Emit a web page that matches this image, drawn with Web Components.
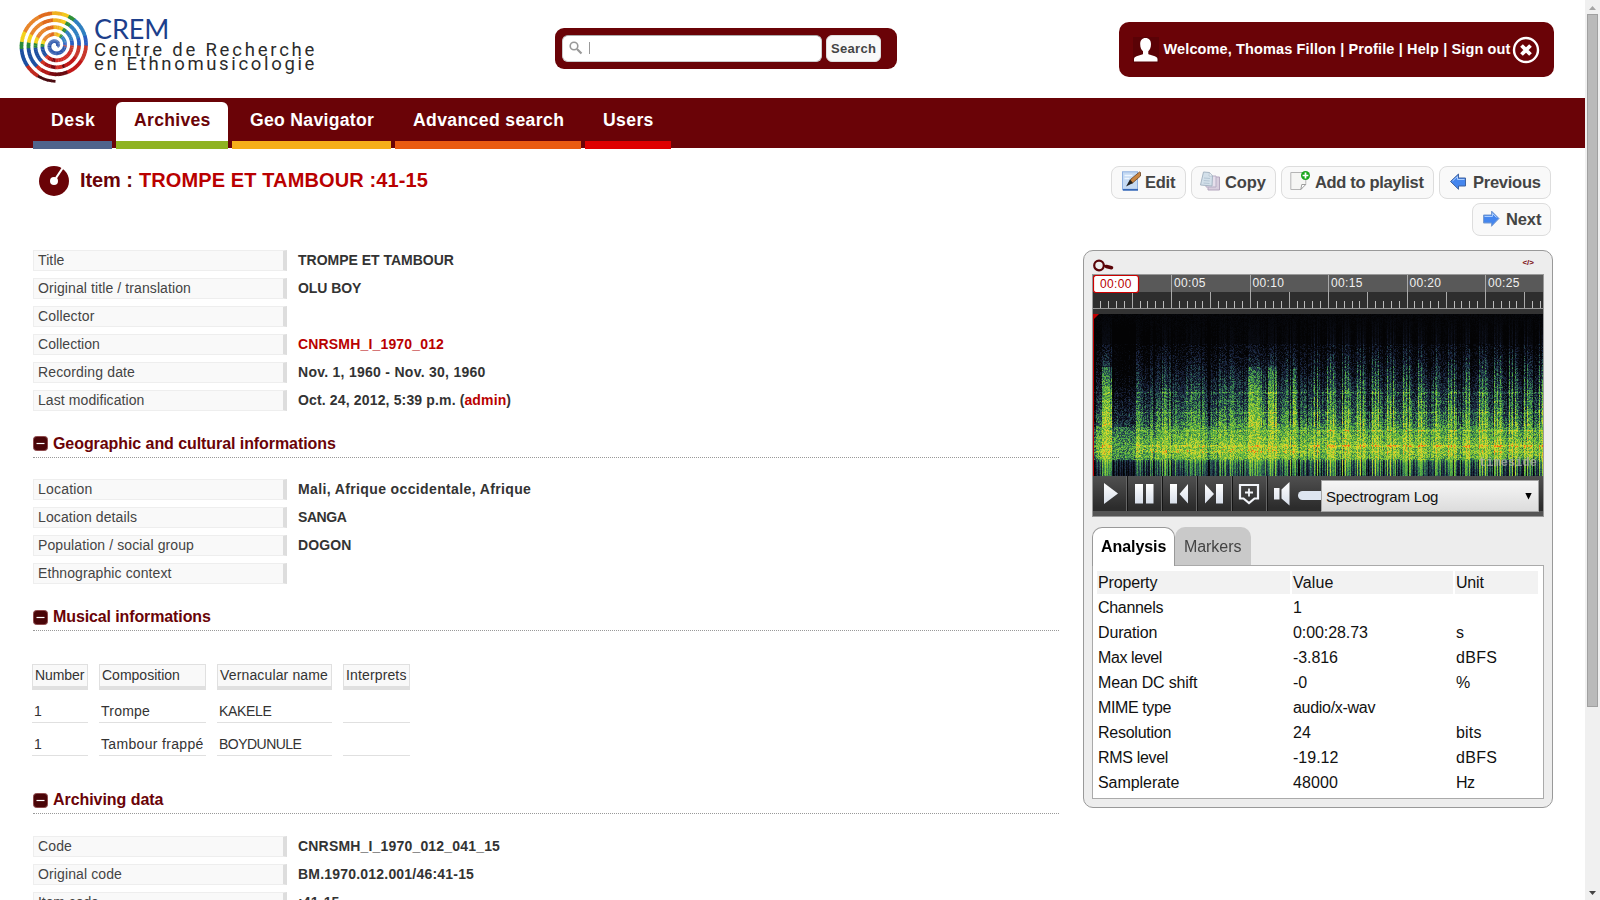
<!DOCTYPE html>
<html lang="en">
<head>
<meta charset="utf-8">
<title>Item : TROMPE ET TAMBOUR</title>
<style>
html,body{margin:0;height:900px;overflow:hidden;background:#fff;font-family:"Liberation Sans",Arial,sans-serif;color:#333}
</style>
</head>
<body>
<archive-app></archive-app>
<script>
const define = (name, html, init) => {
  const tpl = document.createElement('template');
  tpl.innerHTML = html;
  customElements.define(name, class extends HTMLElement {
    constructor() {
      super();
      this.attachShadow({mode: 'open'}).appendChild(tpl.content.cloneNode(true));
    }
    connectedCallback() { if (init && !this.ready) { this.ready = true; init.call(this, this.shadowRoot); } }
  });
};

define('archive-app', `
<style>
:host{display:flex;width:1600px;height:900px;overflow:hidden}
.page{width:1585px;height:900px;overflow:hidden;display:flex;flex-direction:column;flex:none}
main{display:flex;justify-content:space-between;padding:0 32px 0 33px}
.left{width:1026px}
.right{width:470px}
</style>
<div class="page">
  <site-header></site-header>
  <site-nav></site-nav>
  <item-bar></item-bar>
  <main>
    <div class="left">
      <field-row label="Title" w="27"><fit-text w="156.5">TROMPE ET TAMBOUR</fit-text></field-row>
      <field-row label="Original title / translation" w="153.5"><fit-text w="64">OLU BOY</fit-text></field-row>
      <field-row label="Collector" w="57"></field-row>
      <field-row label="Collection" w="62.5"><fit-text w="146.5" style="color:#b90000">CNRSMH_I_1970_012</fit-text></field-row>
      <field-row label="Recording date" w="97.5"><fit-text w="188">Nov. 1, 1960 - Nov. 30, 1960</fit-text></field-row>
      <field-row label="Last modification" w="107"><fit-text w="167">Oct. 24, 2012, 5:39 p.m. (</fit-text><fit-text w="42.5" style="color:#b90000">admin</fit-text><span>)</span></field-row>
      <section-title style="margin-top:22px;--lh:21px;--iy:3px" label="Geographic and cultural informations" w="283.5"></section-title>
      <field-row label="Location" w="55"><fit-text w="233.5">Mali, Afrique occidentale, Afrique</fit-text></field-row>
      <field-row label="Location details" w="99.5"><fit-text w="49.5">SANGA</fit-text></field-row>
      <field-row label="Population / social group" w="156.5"><fit-text w="54">DOGON</fit-text></field-row>
      <field-row label="Ethnographic context" w="134"></field-row>
      <section-title style="margin-top:22px" label="Musical informations" w="158.5"></section-title>
      <performance-table></performance-table>
      <section-title style="margin-top:33px;margin-bottom:21px" label="Archiving data" w="111"></section-title>
      <field-row label="Code" w="34.5"><fit-text w="202.5">CNRSMH_I_1970_012_041_15</fit-text></field-row>
      <field-row label="Original code" w="84.5"><fit-text w="176.5">BM.1970.012.001/46:41-15</fit-text></field-row>
      <field-row label="Item code" w="61.5"><fit-text w="42">:41-15</fit-text></field-row>
    </div>
    <div class="right"><media-panel></media-panel></div>
  </main>
</div>
<scroll-bar></scroll-bar>`);

define('site-header', `
<style>
:host{display:flex;height:98px;box-sizing:border-box;position:relative;align-items:flex-start}
.search{margin:28px 0 0 235px;width:342px;height:41px;border-radius:9px;background:#6a0307;box-sizing:border-box;padding:7px;display:flex;gap:4px}
.input{width:260px;height:27px;box-sizing:border-box;border:1px solid #ccc;border-top-color:#aaa;border-radius:6px;background:#fff;display:flex;align-items:center;padding-left:6px}
.input svg{margin-top:-1px}
.caret{width:1px;height:12px;background:#999;margin:-2px 0 0 6px}
.btn{width:55px;height:27px;box-sizing:border-box;border:1px solid #ddd;border-radius:6px;background:#f9f9f9;color:#444;font:bold 13px/25px "Liberation Sans",sans-serif;text-align:left;padding-left:4px;white-space:nowrap}
.user{margin:22px 0 0 222px;width:435px;height:55px;border-radius:10px;background:#6a0307;color:#fff;display:flex;align-items:center;box-sizing:border-box;padding:0 0 0 14px;font:bold 14.500px/18px "Liberation Sans",sans-serif}
.user fit-text{margin-left:4.500px;margin-top:-2px}
.user .x{margin-left:2px}
crem-logo{width:320px}
</style>
<crem-logo></crem-logo>
<div class="search">
  <div class="input"><svg width="14" height="14" viewBox="0 0 14 14"><circle cx="5" cy="5" r="3.8" fill="none" stroke="#999" stroke-width="1.6"/><path d="M8 8l4.5 4.5" stroke="#999" stroke-width="2.2"/></svg><i class="caret"></i></div>
  <div class="btn"><fit-text w="45.500">Search</fit-text></div>
</div>
<div class="user">
  <svg width="26" height="26" viewBox="0 0 26 26"><rect width="26" height="26" fill="#5a0206"/><path d="M12.5 1c3.600 0 5.500 2.400 5.500 6 0 3.500-1.200 6-2.700 7.300V17c1 1.300 9.200 1.600 9.200 5v2.500H1V22c0-3.400 8-3.700 9-5v-2.700C8.300 13 7.200 10.500 7.200 7 7.200 3.400 9 1 12.500 1z" fill="#fff"/></svg>
  <fit-text w="347.500">Welcome, Thomas Fillon | Profile | Help | Sign out</fit-text>
  <svg class="x" width="28" height="28" viewBox="0 0 28 28"><circle cx="14" cy="14" r="12" fill="none" stroke="#fff" stroke-width="2.400"/><path d="M9.500 9.500l9 9M18.500 9.500l-9 9" stroke="#fff" stroke-width="3.800"/></svg>
</div>`);

define('crem-logo', `
<style>
:host{display:flex;height:98px}
svg{flex:none;width:94px;height:90px}
.t{display:flex;flex-direction:column;align-items:flex-start;padding-top:13px}
.c{font:400 27px/32px Lato,sans-serif;color:#1d3f8c}
.r{font:18.500px/14px Roboto,sans-serif;color:#2b2b2b;white-space:nowrap}
</style>
<svg viewBox="0 0 94 90"></svg>
<div class="t"><fit-text class="c" w="76">CREM</fit-text><fit-text class="r" w="221" style="margin-top:-2px">Centre de Recherche</fit-text><fit-text class="r" w="221">en Ethnomusicologie</fit-text></div>`,
function (root) {
  const svg = root.querySelector('svg'), cx = 55.500, cy = 45.500;
  const stops = [[0,'#7a0a12'],[12,'#b01818'],[28,'#d03020'],[42,'#1d4fa0'],[76,'#1d4fa0'],[84,'#2a8a3a'],[96,'#f3d21c'],[112,'#e8852a'],[150,'#e06a1c'],[172,'#f0b020'],[190,'#f3c81c'],[204,'#2f9038'],[216,'#2f7fc0'],[250,'#2a5cc0'],[266,'#c8382c'],[300,'#c01818'],[335,'#6a0a10'],[361,'#7a0a12']];
  const pt = a => { const r = 35.800 - 7 * a / 360, t = (90 + a) * Math.PI / 180; return [cx + r * Math.cos(t), cy + r * Math.sin(t)]; };
  let out = '';
  for (let a = 0; a < 1740; a += 6) {
    const p = pt(a), q = pt(a + 7), m = a % 360;
    let col = stops.filter(s => s[0] <= m).pop()[1];
    if (a > 1350) col = '#2450a8';
    else if (a < 50) col = m < 25 ? '#4a0a10' : '#c02a20';
    else if (a > 700 && m > 290) col = '#d02c24';
    out += `<path d="M${p.map(v => v.toFixed(2))}L${q.map(v => v.toFixed(2))}" stroke="${col}" stroke-width="${a < 30 ? 2.800 : 3.700}" fill="none"/>`;
  }
  svg.innerHTML = out;
});

define('site-nav', `
<style>
:host{display:flex;height:50px;background:#6a0307;padding:4px 0 0 33px;box-sizing:border-box;gap:4px;flex:none}
div{height:47px;box-sizing:border-box;border-bottom:8px solid;padding:0 0 0 18px;color:#fff;font:bold 17.600px/37px "Liberation Sans",sans-serif;white-space:nowrap}
.on{background:#fff;border-radius:6px 6px 0 0;color:#6a0307}
</style>
<div style="width:79px;border-color:#4f648c"><fit-text w="44.500">Desk</fit-text></div>
<div class="on" style="width:112px;border-color:#8fb322"><fit-text w="77">Archives</fit-text></div>
<div style="width:159px;border-color:#f5ae19"><fit-text w="124.500">Geo Navigator</fit-text></div>
<div style="width:186px;border-color:#e95a10"><fit-text w="151.500">Advanced search</fit-text></div>
<div style="width:86px;border-color:#de0000"><fit-text w="51">Users</fit-text></div>`);

define('item-bar', `
<style>
:host{display:flex;height:102px;justify-content:space-between;padding:0 34px 0 38px;box-sizing:border-box;flex:none}
h1{margin:18px 0 0;display:flex;font:bold 20px/24px "Liberation Sans",sans-serif;color:#6a0307;height:32px;align-items:flex-start;white-space:nowrap}
.b{display:flex;flex-wrap:wrap;justify-content:flex-end;align-content:flex-start;gap:4px 5px;width:460px;margin-top:18px}
.b span{box-sizing:border-box;height:33px;border:1px solid #ddd;border-radius:8px;background:#f9f9f9;color:#444;font:bold 16.500px/31px "Liberation Sans",sans-serif;display:flex;padding-left:10px;white-space:nowrap}
.b svg{width:20px;height:20px;margin:4px 4px 0 0;flex:none}
</style>
<h1><svg width="32" height="32" viewBox="0 0 32 32"><circle cx="16" cy="15" r="15" fill="#6a0307"/><path d="M18 12L25 1.500" stroke="#fff" stroke-width="2.200"/><circle cx="16" cy="15" r="4" fill="#fff"/></svg><fit-text w="53.500" style="margin:2px 0 0 10px">Item :</fit-text><fit-text w="289.500" style="margin:2px 0 0 6px;color:#b90000">TROMPE ET TAMBOUR :41-15</fit-text></h1>
<div class="b">
<span style="width:75px"><svg viewBox="0 0 20 20" style="margin-right:3px"><rect x=".5" y=".8" width="15" height="18" fill="#c5daf3" stroke="#8fb0e0"/><path d="M1 18.800h15" stroke="#3567b8" stroke-width="1.800"/><path d="M2.500 4.500h8M2.500 7.500h5" stroke="#eef6ff" stroke-width="1.500"/><path d="M7 12L9 8l8.500-7L18.500 1.500V5L10.500 12z" fill="#c98642" stroke="#6b4424" stroke-width=".8"/><path d="M4 15.500L8 8.500l3 3.500z" fill="#222"/></svg><fit-text w="31">Edit</fit-text></span>
<span style="width:85px;padding-left:8px"><svg viewBox="0 0 20 20" style="margin-right:5px"><path d="M8 6h11.500v13H8z" fill="#d8cede" stroke="#b3a5bd"/><path d="M6 5h10v11H6z" fill="#e6dfec" stroke="#b7aec5"/><path d="M3.500 1l6 .5 3 3.500-.5 10-11.500-1z" fill="#d3e0ea" stroke="#a6b5c3"/><path d="M9.500 1.500l-.5 3.500h3.500z" fill="#f6fafd" stroke="#a6b5c3" stroke-width=".6"/><path d="M4 7l6 .5M3.700 9.500l6 .5M3.500 12l6 .5" stroke="#b4c6d4"/></svg><fit-text w="41.500">Copy</fit-text></span>
<span style="width:153px;padding-left:8px"><svg viewBox="0 0 20 20" style="margin-right:5px"><path d="M.8 1.500h15v11l-5 6H.8z" fill="#f6f6f4" stroke="#b5b5b5"/><path d="M10.800 18.500l1-5h4z" fill="#fff" stroke="#888" stroke-width=".8"/><circle cx="15.500" cy="4.500" r="4.500" fill="#19a51b"/><path d="M15.500 1.600v5.800M12.600 4.500h5.800" stroke="#fff" stroke-width="1.700"/></svg><fit-text w="109.500">Add to playlist</fit-text></span>
<span style="width:112px;padding-left:9px"><svg viewBox="0 0 20 20"><path d="M1.500 10.500L9.500 3v4h7v8h-7v3.300z" fill="#4586ee" stroke="#40639f"/><path d="M3.500 10l5-4.500V8.500h7" stroke="#a9cdff" fill="none"/></svg><fit-text w="68.500">Previous</fit-text></span>
<span style="width:79px;padding-left:9px"><svg viewBox="0 0 20 20" style="margin-right:4px"><path d="M17 10.500L9.500 3v4h-8v8h8v3.300z" fill="#4586ee" stroke="#7a9ccf"/><path d="M2.500 8.500h8v-3l4 4" stroke="#a9cdff" fill="none"/></svg><fit-text w="36">Next</fit-text></span>
</div>`);

define('field-row', `
<style>
:host{display:flex;height:21px;margin-bottom:7px;font-size:14px;line-height:19px;white-space:nowrap}
.l{box-sizing:border-box;width:254px;border:1px solid #eee;border-right:4px solid #ddd;background:#f9f9f9;color:#444;padding-left:4px;margin-right:11px}
.v{font-weight:bold;color:#333;padding-top:1px;display:flex}
</style><div class="l"><fit-text></fit-text></div><div class="v"><slot></slot></div>`,
function (root) {
  const t = root.querySelector('fit-text');
  t.textContent = this.getAttribute('label');
  t.setAttribute('w', this.getAttribute('w'));
});

define('section-title', `
<style>
:host{display:block;height:26px;margin-bottom:20px}
div{display:flex;align-items:flex-start;border-bottom:1px dotted #999;height:25px;box-sizing:border-box;font:bold 16px/var(--lh,22px) "Liberation Sans",sans-serif;color:#6a0307;white-space:nowrap}
svg{margin:var(--iy,4px) 5px 0 0;flex:none}
</style>
<div><svg width="15" height="15" viewBox="0 0 15 15"><rect x=".5" y=".5" width="14" height="14" rx="3" fill="#4a0508" stroke="#8f4a4d"/><path d="M3.500 7.500h8" stroke="#fff" stroke-width="1.200"/></svg><fit-text></fit-text></div>`,
function (root) {
  const t = root.querySelector('fit-text');
  t.textContent = this.getAttribute('label');
  t.setAttribute('w', this.getAttribute('w'));
});

define('performance-table', `
<style>
:host{display:grid;grid-template-columns:56px 107px 115px 67px;column-gap:11px;margin:32px 0 0 -1px;font-size:14px;color:#333;white-space:nowrap}
.h{height:26px;box-sizing:border-box;border:1px solid #e0e0e0;border-bottom-width:4px;background:#f9f9f9;line-height:21px;padding-left:2px;color:#333}
.c{height:33px;box-sizing:border-box;border-bottom:1px solid #e0e0e0;padding:12px 0 0 2px;line-height:18px}
</style>
<div class="h"><fit-text w="50">Number</fit-text></div><div class="h"><fit-text w="78.500">Composition</fit-text></div><div class="h"><fit-text w="108.500">Vernacular name</fit-text></div><div class="h"><fit-text w="61">Interprets</fit-text></div>
<div class="c">1</div><div class="c"><fit-text w="49.500">Trompe</fit-text></div><div class="c"><fit-text w="53.500">KAKELE</fit-text></div><div class="c"></div>
<div class="c">1</div><div class="c"><fit-text w="103">Tambour frappé</fit-text></div><div class="c"><fit-text w="83.500">BOYDUNULE</fit-text></div><div class="c"></div>`);

define('media-panel', `
<style>
:host{display:block;box-sizing:border-box;width:470px;height:558px;background:#ededed;border:1px solid #999;border-radius:10px;padding:0 8px}
.top{height:23px;display:flex;justify-content:space-between;align-items:flex-start}
.code{font:bold 8px/10px "Liberation Sans",sans-serif;color:#7a0a0e;margin:7px 10px 0 0}
.tabs{display:flex;margin-top:10px;height:38px;font-size:16px;line-height:37px;position:relative;z-index:1;white-space:nowrap}
.a{box-sizing:border-box;width:83px;height:39px;background:#fff;border:1px solid #999;border-bottom:0;border-radius:10px 10px 0 0;padding-left:8px;font-weight:bold;color:#000}
.m{box-sizing:border-box;width:76px;background:#c9c9c9;border-radius:10px 10px 0 0;padding-left:9px;color:#444;line-height:39px}
.box{box-sizing:border-box;width:452px;height:234px;border:1px solid #aaa;background:#fff;padding:5px 0 0 4px;display:grid;grid-template-columns:193px 161px 83px;grid-auto-rows:23px;gap:2px;font-size:16px;line-height:23px;color:#111;white-space:nowrap}
.box div{padding-left:1px}
.box .h{background:#f2f2f2}
</style>
<div class="top"><svg width="22" height="16" viewBox="0 0 22 16" style="margin:7px 0 0 0"><circle cx="7" cy="7.500" r="4.800" fill="none" stroke="#5a0408" stroke-width="2.200"/><path d="M12 7.500l3 1" stroke="#5a0408" stroke-width="2"/><path d="M14.500 8.500l5 1.200" stroke="#5a0408" stroke-width="3.600" stroke-linecap="round"/></svg><span class="code">&lt;/&gt;</span></div>
<media-player></media-player>
<div class="tabs"><div class="a"><fit-text w="66">Analysis</fit-text></div><div class="m"><fit-text w="58">Markers</fit-text></div></div>
<div class="box"></div>`,
function (root) {
  const rows = [['Property:60','Value:41','Unit:28.500'],['Channels:66','1',''],['Duration:60','0:00:28.73:75.500','s'],['Max level:65','-3.816:45.500','dBFS:41.500'],['Mean DC shift:100','-0','%'],['MIME type:74','audio/x-wav:83',''],['Resolution:74','24','bits:26'],['RMS level:71','-19.12:46','dBFS:41.500'],['Samplerate:82','48000:45.500','Hz:19.500']];
  const box = root.querySelector('.box');
  rows.forEach((r, i) => r.forEach(c => {
    const d = document.createElement('div');
    if (!i) d.className = 'h';
    const m = c.match(/^(.{2,}):([\d.]+)$/);
    if (m) { const f = document.createElement('fit-text'); f.textContent = m[1]; f.setAttribute('w', m[2]); d.append(f); } else d.textContent = c;
    box.append(d);
  }));
});

define('media-player', `
<style>
:host{display:block;box-sizing:border-box;width:452px;height:243px;border:1px solid #999;background:#2e2e2e;position:relative}
.ruler,canvas,.ctl{display:block}
.ruler{width:450px;height:39px}
.wrap{position:relative;height:162px}
.wm{position:absolute;right:6px;bottom:6px;font:bold 12px/13px "Liberation Mono",monospace;color:rgba(175,175,175,.75)}
.ctl{display:flex;height:35px;background:linear-gradient(#505050,#2c2c2c 90%);align-items:flex-start;position:relative}
.ctl>svg{flex:none}
.foot{height:5px;background:#555}
.sel{position:absolute;left:228px;top:4px;width:218px;height:32px;box-sizing:border-box;border:1px solid #a5a5a5;background:linear-gradient(#f6f6f6,#dcdcdc);font-size:15px;line-height:32px;color:#111;padding-left:4px;white-space:nowrap;display:flex;justify-content:space-between;padding-right:6px}
.sel svg{margin-top:12px}
text{font:12px "Liberation Sans",sans-serif;fill:#f0f0f0}
</style>
<svg class="ruler" viewBox="0 0 450 39"></svg>
<div class="wrap"><canvas width="450" height="162"></canvas><span class="wm"><fit-text w="58.500">timeside</fit-text></span></div>
<div class="ctl"><svg width="228" height="35" viewBox="0 0 228 35">
<defs><linearGradient id="g" x2="0" y2="1"><stop stop-color="#fff"/><stop offset="1" stop-color="#d8dfea"/></linearGradient></defs>
<g stroke="#151515"><path d="M34.500 0v35M69.500 0v35M104.500 0v35M139.500 0v35M174.500 0v35"/></g>
<g stroke="#666"><path d="M33.500 0v35M68.500 0v35M103.500 0v35M138.500 0v35M173.500 0v35"/></g>
<g fill="url(#g)"><path d="M11 7L25 17.500 11 28z"/><path d="M42 8h8v19.500h-8zM53 8h7.500v19.500H53z"/><path d="M77 8h7v19.500h-7zM95 8v19.500L86.500 18z"/><path d="M112 8v19.500l9-9.500zM123 8h7v19.500h-7z"/><path d="M181 12h5.500v11.500H181zM196.500 6v23.500L188.500 22.500v-9z"/></g>
<path d="M147 9h18v13.500h-3.500L156 27l-5.500-4.500H147z" fill="none" stroke="#f2f5fa" stroke-width="2.200"/><path d="M156 12.500v8M152 16.500h8" stroke="#f2f5fa" stroke-width="1.800"/>
<path d="M228 15h-18.500a4.500 4.500 0 0 0 0 9H228z" fill="#dde5f0"/>
</svg>
<div class="sel"><fit-text w="113">Spectrogram Log</fit-text><svg width="7" height="8" viewBox="0 0 7 8"><path d="M.3 0h6.400L3.500 6.500z" fill="#000"/></svg></div></div>
<div class="foot"></div>`,
function (root) {
  let s = '<rect width="450" height="17" fill="#595959"/><rect y="17" width="450" height="17" fill="#2e2e2e"/><rect y="33" width="450" height="1" fill="#999"/><rect y="34" width="450" height="5" fill="#333"/>';
  for (let i = 1; i < 58; i++) {
    const x = Math.floor(i * 7.850), top = i % 10 === 0 ? 0 : i % 5 === 0 ? 17 : 26;
    s += `<rect x="${x}" y="${top}" width="1" height="${33 - top}" fill="${top === 26 ? '#bbb' : '#aaa'}"/>`;
  }
  ['00:05','00:10','00:15','00:20','00:25'].forEach((t, i) => s += `<text x="${(i + 1) * 78.500 + 2.500}" y="12" letter-spacing=".35">${t}</text>`);
  s += '<rect x=".5" y=".5" width="45" height="17" rx="2.500" fill="#fff" stroke="#c00" stroke-width="1.200"/><text x="7" y="13" letter-spacing=".35" style="fill:#b90000">00:00</text>';
  root.querySelector('.ruler').innerHTML = s;

  /* Log-frequency spectrogram: column energy times a per-row profile */
  const W = 450, H = 162, ctx = root.querySelector('canvas').getContext('2d'), img = ctx.createImageData(W, H);
  let seed = 7;
  const rnd = () => (seed = (seed * 16807) % 2147483647) / 2147483647;
  const map = [[0,3,3,4],[.12,10,13,22],[.27,27,38,66],[.4,42,92,84],[.52,72,160,72],[.66,130,196,58],[.8,206,218,46],[.9,236,196,38],[1,238,100,20]];
  const lerp = (pts, v) => { let i = 1; while (i < pts.length - 1 && pts[i][0] < v) i++; const a = pts[i-1], b = pts[i], k = Math.max(0, Math.min(1, (v - a[0]) / (b[0] - a[0]))); return a.slice(1).map((c, j) => c + (b[j+1] - c) * k); };
  const prof = [[0,.03],[28,.05],[38,.1],[55,.2],[75,.33],[95,.43],[108,.52],[120,.61],[132,.68],[143,.66],[148,.48],[162,.38]];
  const inBurst = x => (x > 8 && x < 19) || (x > 154 && x < 169) || (x > 174 && x < 184) || (x > 199 && x < 204);
  const col = [];
  for (let x = 0; x < W; x++) {
    let e;
    if (x < 3) e = -.35;
    else if (x < 9) e = -.1;
    else if (x < 19) e = .08;
    else if (x < 43) e = -.27 + rnd() * .12;
    else if (x < 218) e = inBurst(x) ? .02 + rnd() * .08 : -.1 + rnd() * .14 + .06 * Math.sin(x / 5);
    else {
      const p = (x - 218) % 15.200;
      e = p < 9 ? (Math.floor(p) % 3 === 0 ? .17 : -.02 + rnd() * .07) : -.14 + rnd() * .1;
    }
    col.push(e + (rnd() < .15 ? -.14 : 0));
  }
  const harm = {78:.16,79:.1,87:.08,98:.12,99:.06,110:.06,116:.1,117:.06,124:.07,131:.12,132:.12,133:.05,137:.06,138:.05};
  for (let y = 0; y < H; y++) for (let x = 0; x < W; x++) {
    let v = lerp(prof, y)[0];
    const c = col[x], gate = Math.min(1, y / 55), pulse = x >= 218 && (x - 218) % 15.200 < 9;
    v += c * gate * (y > 112 ? .7 : 1.150);
    if (inBurst(x) && y > 52) v += y > 112 ? .03 : .13;
    if (x > 42 || x < 19) v += (harm[y] || 0) * (Math.sin(x / 4.200 + y) > -.5 ? 1 : .1);
    if (pulse && (y === 131 || y === 132 || y === 116)) v += .1;
    if (x > 42 && x < 218 && y > 134 && y < 139 && rnd() < .35) v += .14;
    if (y > 145) v += c * .5 + ((x * 7) % 5 - 2) * .06;
    v += (rnd() - .5) * (y < 30 ? .07 : y > 145 ? .12 : .32);
    const rgb = lerp(map, Math.max(0, Math.min(1, v))), o = (y * W + x) * 4;
    img.data.set([rgb[0], rgb[1], rgb[2], 255], o);
  }
  ctx.putImageData(img, 0, 0);
  ctx.fillStyle = '#c00000';
  ctx.fillRect(0, 0, 1, H);
  ctx.beginPath(); ctx.moveTo(0, 0); ctx.lineTo(6, 0); ctx.lineTo(0, 6); ctx.fill();
});

define('scroll-bar', `
<style>
:host{display:flex;flex-direction:column;align-items:center;width:15px;height:900px;background:#f0f0f0;flex:none}
.t{width:11px;height:693px;box-sizing:border-box;background:#bababa;border:1px solid #a0a0a0}
svg{display:block;flex:none}
</style>
<svg width="15" height="14" viewBox="0 0 15 14"><path d="M4 10l3.500-4L11 10z" fill="#a5a5a5"/></svg><div class="t"></div><svg width="15" height="193" viewBox="0 0 15 193"><path d="M4 184h7l-3.500 4z" fill="#444"/></svg>`);

/* Text run whose tracking is adjusted to occupy the width given in "w" */
customElements.define('fit-text', class extends HTMLElement {
  constructor() {
    super();
    this.attachShadow({mode: 'open'}).innerHTML = '<style>:host{display:inline-block;white-space:pre}</style><slot></slot>';
  }
  connectedCallback() {
    const w = parseFloat(this.getAttribute('w')) - .6, n = this.textContent.length;
    if (!(w > 0) || n < 2) return;
    this.style.letterSpacing = '0px';
    const nat = this.getBoundingClientRect().width, ls = (w - nat) / (n - 1);
    this.style.letterSpacing = ls.toFixed(3) + 'px';
    this.style.marginRight = (-ls).toFixed(3) + 'px';
  }
});
</script>
</body>
</html>
